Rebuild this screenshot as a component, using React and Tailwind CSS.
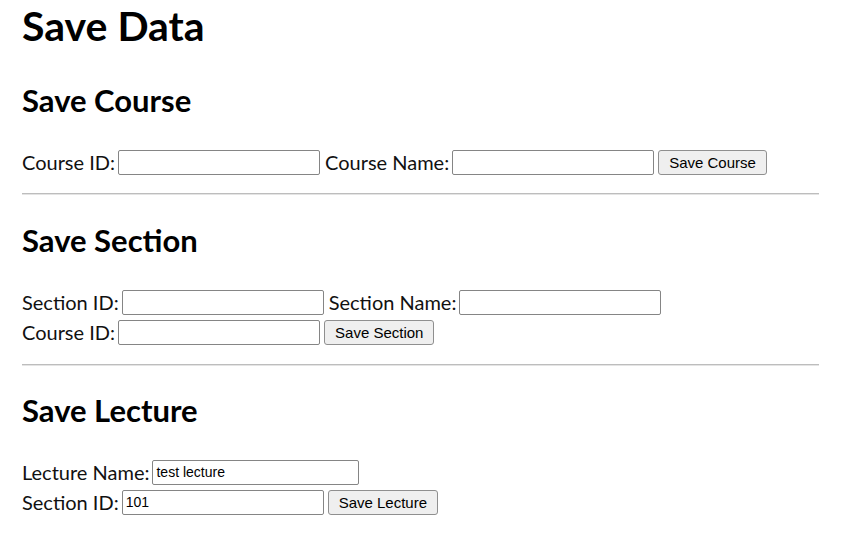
export default function App() {
  const label = 'text-[20px] text-[#111] leading-[30px] whitespace-nowrap';
  const input =
    'h-[25px] border border-[#858585] rounded-[2px] bg-white px-[3px] text-[14px] text-black outline-none font-["Liberation_Sans",Arial,sans-serif]';
  const button =
    'h-[25px] border border-[#8f8f8f] rounded-[3px] bg-[#efefef] px-[10px] text-[15px] text-black leading-none font-["Liberation_Sans",Arial,sans-serif]';
  const hr = 'border-t border-b border-t-[#bdbdbd] border-b-[#e4e4e4]';

  return (
    <div className="min-h-[536px] w-[850px] bg-white pl-[22px] pr-[31px] font-['Lato','Noto_Sans',sans-serif] text-black">
      <h1 className="pt-[2px] text-[41px] font-bold leading-[48px]">Save Data</h1>

      <h2 className="mt-[31px] text-[31px] font-bold leading-[38px]">Save Course</h2>
      <div className="mt-[28px] flex items-center h-[30px]">
        <span className={label}>Course ID:</span>
        <input className={`${input} ml-[3px] w-[202px]`} />
        <span className={`${label} ml-[5px]`}>Course Name:</span>
        <input className={`${input} ml-[3px] w-[202px]`} />
        <button className={`${button} ml-[4px]`}>Save Course</button>
      </div>
      <hr className={`mt-[16px] ${hr}`} />

      <h2 className="mt-[26px] text-[31px] font-bold leading-[38px]">Save Section</h2>
      <div className="mt-[28px] flex items-center h-[30px]">
        <span className={label}>Section ID:</span>
        <input className={`${input} ml-[3px] w-[202px]`} />
        <span className={`${label} ml-[5px]`}>Section Name:</span>
        <input className={`${input} ml-[3px] w-[202px]`} />
      </div>
      <div className="flex items-center h-[30px]">
        <span className={label}>Course ID:</span>
        <input className={`${input} ml-[3px] w-[202px]`} />
        <button className={`${button} ml-[4px]`}>Save Section</button>
      </div>
      <hr className={`mt-[17px] ${hr}`} />

      <h2 className="mt-[25px] text-[31px] font-bold leading-[38px]">Save Lecture</h2>
      <div className="mt-[28px] flex items-center h-[30px]">
        <span className={label}>Lecture Name:</span>
        <input className={`${input} ml-[3px] w-[207px]`} defaultValue="test lecture" />
      </div>
      <div className="flex items-center h-[30px]">
        <span className={label}>Section ID:</span>
        <input className={`${input} ml-[3px] w-[202px]`} defaultValue="101" />
        <button className={`${button} ml-[4px]`}>Save Lecture</button>
      </div>
    </div>
  );
}
